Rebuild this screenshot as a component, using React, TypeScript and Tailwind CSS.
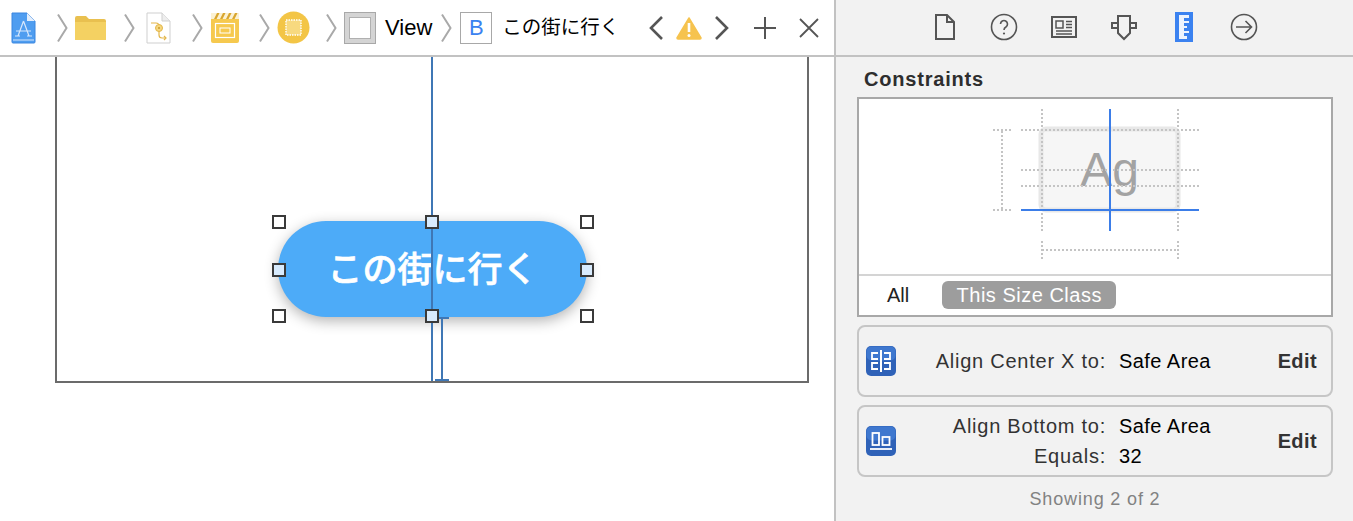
import React from 'react';

const Chevron = ({ className = '' }: { className?: string }) => (
  <svg width="11" height="30" viewBox="0 0 11 30" className={className}>
    <path d="M1 1.5 L9.5 15 L1 28.5" fill="none" stroke="#a9a9a9" strokeWidth="2" />
  </svg>
);

const AppFileIcon = () => (
  <svg width="25" height="32" viewBox="0 0 25 32">
    <path d="M1 1h15l8 8v21a1 1 0 0 1-1 1H2a1 1 0 0 1-1-1z" fill="#4f9df0" stroke="#3a86e0" />
    <path d="M16 1v8h8z" fill="#e3eefc" />
    <path d="M12.5 9 L7 24 M12.5 9 L18 24 M5 19h15 M4 24h5 M16 24h5" stroke="#d6e7fc" strokeWidth="1.2" fill="none" />
    <path d="M2 28h21" stroke="#d6e7fc" />
  </svg>
);

const FolderIcon = () => (
  <svg width="31" height="26" viewBox="0 0 31 26">
    <path d="M0 3a2 2 0 0 1 2-2h9l3 3h15a2 2 0 0 1 2 2v18a1 1 0 0 1-1 1H1a1 1 0 0 1-1-1z" fill="#e9c04f" />
    <path d="M0 7h31v17a1 1 0 0 1-1 1H1a1 1 0 0 1-1-1z" fill="#f4d162" />
  </svg>
);

const StoryDocIcon = () => (
  <svg width="25" height="32" viewBox="0 0 25 32">
    <path d="M1 1h15l8 8v22H1z" fill="#fff" stroke="#cfcfcf" />
    <path d="M16 1v8h8" fill="#eee" stroke="#cfcfcf" />
    <path d="M5 11h5q3 0 3 3v9q0 3 3 3h4" fill="none" stroke="#e3b64a" strokeWidth="1.2" />
    <path d="M18 24l2 2-2 2" fill="none" stroke="#e3b64a" strokeWidth="1.2" />
    <circle cx="13" cy="16" r="3.5" fill="#f5d77f" stroke="#e3b64a" />
    <circle cx="13" cy="16" r="1" fill="#c99a2a" />
  </svg>
);

const ClapperIcon = () => (
  <svg width="28" height="30" viewBox="0 0 28 30">
    <rect x="0" y="0" width="28" height="30" rx="2" fill="#f6c94f" />
    <rect x="0" y="0" width="28" height="6" fill="#fbf1d2" />
    <path d="M3 6l3-6h2.5l-3 6zM9 6l3-6h2.5l-3 6zM15 6l3-6h2.5l-3 6zM21 6l3-6h2.5l-3 6z" fill="#d9a62f" />
    <rect x="4.5" y="10.5" width="19" height="14" fill="none" stroke="#fff" strokeWidth="1.2" />
    <rect x="9" y="15" width="10" height="5" fill="none" stroke="#fff" />
  </svg>
);

const ViewControllerIcon = () => (
  <svg width="33" height="33" viewBox="0 0 33 33">
    <circle cx="16.5" cy="16.5" r="16" fill="#f3c546" />
    <rect x="9" y="9" width="15" height="15" fill="#f7d97f" stroke="#fff" strokeWidth="1.4" strokeDasharray="1.5 1" />
  </svg>
);

const FileOutline = () => (
  <svg width="22" height="28" viewBox="0 0 22 28">
    <path d="M2 2h11l7 7v17H2z M13 2v7h7" fill="none" stroke="#555" strokeWidth="2" />
  </svg>
);

const HelpCircle = () => (
  <svg width="28" height="28" viewBox="0 0 28 28">
    <circle cx="14" cy="14" r="12.5" fill="none" stroke="#555" strokeWidth="1.6" />
    <path d="M10.5 11a3.5 3.5 0 1 1 5.4 3c-1.3.8-1.9 1.5-1.9 3" fill="none" stroke="#555" strokeWidth="1.6" />
    <circle cx="14" cy="20.5" r="1.1" fill="#555" />
  </svg>
);

const IdentityCard = () => (
  <svg width="26" height="22" viewBox="0 0 26 22">
    <rect x="1" y="1" width="24" height="20" fill="none" stroke="#555" strokeWidth="2" />
    <rect x="5" y="5" width="7" height="7" fill="none" stroke="#555" strokeWidth="1.5" />
    <path d="M15 5.5h6M15 8.5h6M15 11.5h6M5 15h16M5 18h16" stroke="#555" strokeWidth="1.4" />
  </svg>
);

const AttributesIcon = () => (
  <svg width="26" height="27" viewBox="0 0 26 27">
    <path d="M7 2h12v17l-6 6-6-6z M7 9H1v5h6 M19 9h6v5h-6" fill="none" stroke="#555" strokeWidth="2" />
  </svg>
);

const RulerIcon = () => (
  <svg width="18" height="30" viewBox="0 0 18 30">
    <rect width="18" height="30" fill="#3b82f0" />
    <path d="M4 3h10v3H9v3h5v2H9v3h3v2H9v3h5v2H9v3h3v3H4z" fill="#edf3fd" />
  </svg>
);

const ArrowCircle = () => (
  <svg width="28" height="28" viewBox="0 0 28 28">
    <circle cx="14" cy="14" r="12.5" fill="none" stroke="#555" strokeWidth="1.6" />
    <path d="M6 14h15M15.5 8l6 6-6 6" fill="none" stroke="#555" strokeWidth="1.6" />
  </svg>
);

const AlignCenterIcon = () => (
  <svg width="30" height="30" viewBox="0 0 30 30">
    <rect width="30" height="30" rx="5" fill="#2f62b8" />
    <rect x="0.5" y="0.5" width="29" height="14" rx="5" fill="#3f78cf" />
    <path d="M15 4v22" stroke="#fff" strokeWidth="2" />
    <path d="M12 7H6v6h6 M18 7h6v6h-6 M12 17H6v6h6 M18 17h6v6h-6" fill="none" stroke="#fff" strokeWidth="1.8" />
  </svg>
);

const AlignBottomIcon = () => (
  <svg width="30" height="30" viewBox="0 0 30 30">
    <rect width="30" height="30" rx="5" fill="#2f62b8" />
    <rect x="0.5" y="0.5" width="29" height="14" rx="5" fill="#3f78cf" />
    <rect x="6.5" y="7" width="6.5" height="12" fill="none" stroke="#fff" strokeWidth="1.8" />
    <rect x="16.5" y="11" width="7" height="8" fill="none" stroke="#fff" strokeWidth="1.8" />
    <path d="M4 23h22" stroke="#fff" strokeWidth="1.8" />
  </svg>
);

const Handle = ({ className }: { className: string }) => (
  <div className={`absolute w-[14px] h-[14px] border-2 border-[#3a3a3a] ${className}`} />
);

const ConstraintDiagram = () => (
  <svg width="472" height="175" viewBox="859 99 472 175" className="block">
    <rect x="1041" y="129" width="137" height="81" rx="5" fill="#f6f6f6" stroke="#e8e8e8" strokeWidth="5" />
    <text x="1109.5" y="186" textAnchor="middle" fontFamily="Liberation Sans" fontSize="48" fill="#a3a3a3">Ag</text>
    <g stroke="#c4c4c4" strokeWidth="2" strokeDasharray="2 2" fill="none">
      <path d="M1021 130H1199M1021 170H1199M1021 186H1199" />
      <path d="M1042 109V231M1178 109V231" />
      <path d="M993 130H1011M993 210H1011M1002 131V209" />
      <path d="M1042 241V259M1178 241V259M1042 250H1178" />
    </g>
    <path d="M1021 210H1199M1110 109V231" stroke="#3b7de8" strokeWidth="2" />
  </svg>
);

const ConstraintCard = ({
  icon,
  rows,
}: {
  icon: React.ReactNode;
  rows: [string, string][];
}) => (
  <div className="flex items-center h-[72px] rounded-lg border-2 border-[#c6c6c6] pl-[7px] pr-[14px]">
    {icon}
    <div className="flex-1 flex flex-col gap-[8px]">
      {rows.map(([label, value]) => (
        <div key={label} className="flex text-[20px] leading-[22px]">
          <span className="w-[210px] text-right text-[#333] tracking-[0.75px]">{label}</span>
          <span className="ml-[13px] text-black tracking-[0.45px]">{value}</span>
        </div>
      ))}
    </div>
    <span className="font-bold text-[20px] text-[#333] tracking-[0.4px]">Edit</span>
  </div>
);

export default function App() {
  return (
    <div className="flex w-[1353px] h-[521px] overflow-hidden bg-white font-['Liberation_Sans','Noto_Sans_CJK_JP',sans-serif]">
      <div className="w-[834px] shrink-0 flex flex-col">
        <div className="h-[57px] shrink-0 border-b-2 border-[#c2c2c2] flex items-center pl-[11px]">
          <AppFileIcon />
          <Chevron className="ml-[21px]" />
          <div className="ml-[7px]"><FolderIcon /></div>
          <Chevron className="ml-[18px]" />
          <div className="ml-[11px]"><StoryDocIcon /></div>
          <Chevron className="ml-[21px]" />
          <div className="ml-[8px]"><ClapperIcon /></div>
          <Chevron className="ml-[20px]" />
          <div className="ml-[7px]"><ViewControllerIcon /></div>
          <Chevron className="ml-[16px]" />
          <div className="ml-[7px] w-[32px] h-[32px] border border-[#a8a8a8] bg-[#d4d4d4] flex items-center justify-center">
            <div className="w-[22px] h-[22px] bg-white border border-[#b0b0b0]" />
          </div>
          <span className="ml-[9px] text-[22px] text-black">View</span>
          <Chevron className="ml-[9px]" />
          <div className="ml-[8px] w-[32px] h-[32px] border border-[#a8a8a8] flex items-center justify-center text-[22px] text-[#3b82f0]">B</div>
          <span className="ml-[10px] text-[19.5px] text-black whitespace-nowrap">この街に行く</span>
          <svg width="16" height="26" viewBox="0 0 16 26" className="ml-[29px]">
            <path d="M14 2L3 13l11 11" fill="none" stroke="#555" strokeWidth="2.6" />
          </svg>
          <svg width="26" height="24" viewBox="0 0 26 24" className="ml-[12px]">
            <path d="M13 2L25 22a1 1 0 0 1-1 1H2a1 1 0 0 1-1-1z" fill="#f6c34e" stroke="#f6c34e" strokeLinejoin="round" strokeWidth="1.5" />
            <path d="M13 7v9" stroke="#fff" strokeWidth="2.6" />
            <circle cx="13" cy="19.5" r="1.5" fill="#fff" />
          </svg>
          <svg width="16" height="26" viewBox="0 0 16 26" className="ml-[12px]">
            <path d="M2 2l11 11L2 24" fill="none" stroke="#555" strokeWidth="2.6" />
          </svg>
          <svg width="24" height="24" viewBox="0 0 24 24" className="ml-[23px]">
            <path d="M12 1v22M1 12h22" stroke="#555" strokeWidth="2" />
          </svg>
          <svg width="20" height="20" viewBox="0 0 20 20" className="ml-[22px]">
            <path d="M1 1l18 18M19 1L1 19" stroke="#555" strokeWidth="1.8" />
          </svg>
        </div>
        <div className="flex-1 pl-[55px]">
          <div className="relative w-[754px] h-[326px] border-x-2 border-b-2 border-[#6b6b6b]">
            <div className="flex justify-center pt-[164px] pl-[1px]">
              <button className="w-[309px] h-[96px] pb-[3px] rounded-[48px] bg-[#4dabf8] text-white font-medium text-[35px] [-webkit-text-stroke:0.6px_white] shadow-[0_4px_14px_rgba(0,0,0,0.3)] font-['Noto_Sans_CJK_JP',sans-serif]">
                この街に行く
              </button>
            </div>
            <div className="absolute left-[374px] top-0 w-[2px] h-[324px] bg-[#3f77b5]" />
            <div className="absolute left-[378px] top-[260px] w-[14px] h-[2px] bg-[#3f77b5]" />
            <div className="absolute left-[384px] top-[260px] w-[2px] h-[63px] bg-[#3f77b5]" />
            <div className="absolute left-[378px] top-[322px] w-[14px] h-[2px] bg-[#3f77b5]" />
            <Handle className="left-[215px] top-[158px] bg-white" />
            <Handle className="left-[368px] top-[158px] bg-[#d8ebfd]" />
            <Handle className="left-[523px] top-[158px] bg-white" />
            <Handle className="left-[215px] top-[206px] bg-[#d8ebfd]" />
            <Handle className="left-[523px] top-[206px] bg-[#d8ebfd]" />
            <Handle className="left-[215px] top-[252px] bg-white" />
            <Handle className="left-[368px] top-[252px] bg-[#d8ebfd]" />
            <Handle className="left-[523px] top-[252px] bg-white" />
          </div>
        </div>
      </div>
      <div className="flex-1 border-l-2 border-[#c2c2c2] bg-[#f2f2f2] flex flex-col">
        <div className="h-[57px] shrink-0 border-b-2 border-[#c2c2c2] flex items-center pl-[98px] pb-[1px]">
          <FileOutline />
          <div className="ml-[34px]"><HelpCircle /></div>
          <div className="ml-[33px]"><IdentityCard /></div>
          <div className="ml-[34px]"><AttributesIcon /></div>
          <div className="ml-[38px]"><RulerIcon /></div>
          <div className="ml-[37px]"><ArrowCircle /></div>
        </div>
        <div className="pl-[21px] pr-[20px] flex flex-col flex-1">
          <div className="ml-[7px] mt-[10px] h-[25px] font-bold text-[20px] leading-[24px] text-[#2e2e2e] tracking-[0.8px]">Constraints</div>
          <div className="mt-[5px] h-[220px] border-2 border-[#a8a8a8] bg-white flex flex-col">
            <ConstraintDiagram />
            <div className="flex-1 border-t-2 border-[#d4d4d4] flex items-center pb-[2px]">
              <span className="ml-[28px] text-[20px] text-[#222]">All</span>
              <span className="ml-[33px] w-[174px] h-[28px] rounded-md bg-[#9d9d9d] text-white text-[20px] leading-[28px] text-center tracking-[0.5px]">This Size Class</span>
            </div>
          </div>
          <div className="mt-[8px]">
            <ConstraintCard icon={<AlignCenterIcon />} rows={[['Align Center X to:', 'Safe Area']]} />
          </div>
          <div className="mt-[8px]">
            <ConstraintCard
              icon={<AlignBottomIcon />}
              rows={[
                ['Align Bottom to:', 'Safe Area'],
                ['Equals:', '32'],
              ]}
            />
          </div>
          <div className="mt-[11px] text-center text-[18px] leading-[22px] text-[#828282] tracking-[0.85px]">Showing 2 of 2</div>
        </div>
      </div>
    </div>
  );
}
